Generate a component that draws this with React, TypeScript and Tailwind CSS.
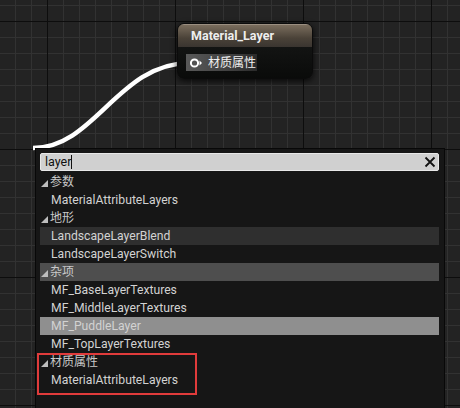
import React from "react";

type Row = { kind: "cat" | "item"; label: string; bg?: string };

const ROWS: Row[] = [
  { kind: "cat", label: "参数" },
  { kind: "item", label: "MaterialAttributeLayers" },
  { kind: "cat", label: "地形" },
  { kind: "item", label: "LandscapeLayerBlend", bg: "bg-[#2f2f2f]" },
  { kind: "item", label: "LandscapeLayerSwitch" },
  { kind: "cat", label: "杂项", bg: "bg-[#4e4e4e]" },
  { kind: "item", label: "MF_BaseLayerTextures" },
  { kind: "item", label: "MF_MiddleLayerTextures" },
  { kind: "item", label: "MF_PuddleLayer", bg: "bg-[#8f8f8f]" },
  { kind: "item", label: "MF_TopLayerTextures" },
];

const FONT = "font-['Roboto','Noto_Sans_CJK_SC',sans-serif]";

function Tri() {
  return (
    <svg width="7" height="7" viewBox="0 0 7 7" className="mr-[2px] mt-[2px] shrink-0">
      <polygon points="7,0 7,7 0,7" fill="#bdbdbd" />
    </svg>
  );
}

function ListRow({ row }: { row: Row }) {
  return (
    <div className={`h-[18px] flex items-center ${row.bg ?? ""}`}>
      {row.kind === "cat" ? (
        <div className="flex items-center pl-[1px] text-[12px] text-[#c9c9c9]">
          <Tri />
          {row.label}
        </div>
      ) : (
        <div className="pl-[11px] text-[12.2px] text-[#d2d2d2]">{row.label}</div>
      )}
    </div>
  );
}

export default function App() {
  return (
    <div
      className={`relative w-[460px] h-[408px] overflow-hidden bg-[#232323] ${FONT} [background-image:linear-gradient(#0d0d0d_1px,transparent_1px),linear-gradient(90deg,#0d0d0d_1px,transparent_1px),linear-gradient(#323232_1px,transparent_1px),linear-gradient(90deg,#323232_1px,transparent_1px)] [background-size:128px_128px,128px_128px,16px_16px,16px_16px] [background-position:47px_21px,47px_21px,15px_5px,15px_5px]`}
    >
      {/* wire */}
      <svg className="absolute left-0 top-0" width="460" height="408">
        <path d="M33 148 C 95 148, 118 63, 190 63" stroke="#ffffff" strokeWidth="4.5" fill="none" />
      </svg>

      {/* node */}
      <div className="absolute left-[177px] top-[23px] w-[136px] h-[56px] rounded-[7px] overflow-hidden border border-[#0b0b0b] shadow-[0_2px_6px_rgba(0,0,0,0.8)] bg-[linear-gradient(#191a19,#0a0b0a)]">
        <div className="h-[23px] flex items-center pl-[13px] bg-[linear-gradient(#7a6d5d,#4a4238_60%,#3a3530)] border-t border-[#9a8e80]">
          <span className="text-[12.5px] font-bold text-[#eeeeee] font-['Roboto',sans-serif]">Material_Layer</span>
        </div>
        <div className="pt-[7px] pl-[8px]">
          <div className="h-[17px] w-[71px] flex items-center bg-[linear-gradient(90deg,#595959,#3c3c3c_70%,#2a2a2a)]">
            <svg width="14" height="12" viewBox="0 0 14 12" className="ml-[3px] mr-[5px]">
              <circle cx="5.5" cy="6" r="3.6" stroke="#ffffff" strokeWidth="2" fill="none" />
              <polygon points="10.5,3.5 13,6 10.5,8.5" fill="#ffffff" />
            </svg>
            <span className="text-[12px] text-[#f0f0f0] leading-none">材质属性</span>
          </div>
        </div>
      </div>

      {/* popup */}
      <div className="absolute left-[35px] top-[148px] w-[410px] h-[270px] bg-[#161616] border border-[#080808] pl-[4px] pt-[4px]">
        <div className="w-[399px] h-[18px] bg-[#d0d0d0] border border-[#e8e8e8] rounded-[2px] flex items-center pl-[4px] pr-[2px]">
          <span className="text-[12.5px] text-[#111111] leading-none">layer</span>
          <span className="w-[1px] h-[14px] bg-[#111111]" />
          <svg width="12" height="12" viewBox="0 0 12 12" className="ml-auto">
            <path d="M1.5 1.5 L10.5 10.5 M10.5 1.5 L1.5 10.5" stroke="#111111" strokeWidth="1.8" />
          </svg>
        </div>
        <div className="mt-[2px] w-[399px]">
          {ROWS.map((r, i) => (
            <ListRow key={i} row={r} />
          ))}
          <div className="-ml-[3px] w-[160px] h-[42px] border-2 border-[#e03b3b] pl-[1px]">
            <div className="h-[18px] flex items-center pl-[1px] -mt-[2px] text-[12px] text-[#c9c9c9]">
              <Tri />
              材质属性
            </div>
            <div className="h-[18px] flex items-center pl-[11px] text-[12.2px] text-[#d2d2d2]">MaterialAttributeLayers</div>
          </div>
        </div>
      </div>
    </div>
  );
}
